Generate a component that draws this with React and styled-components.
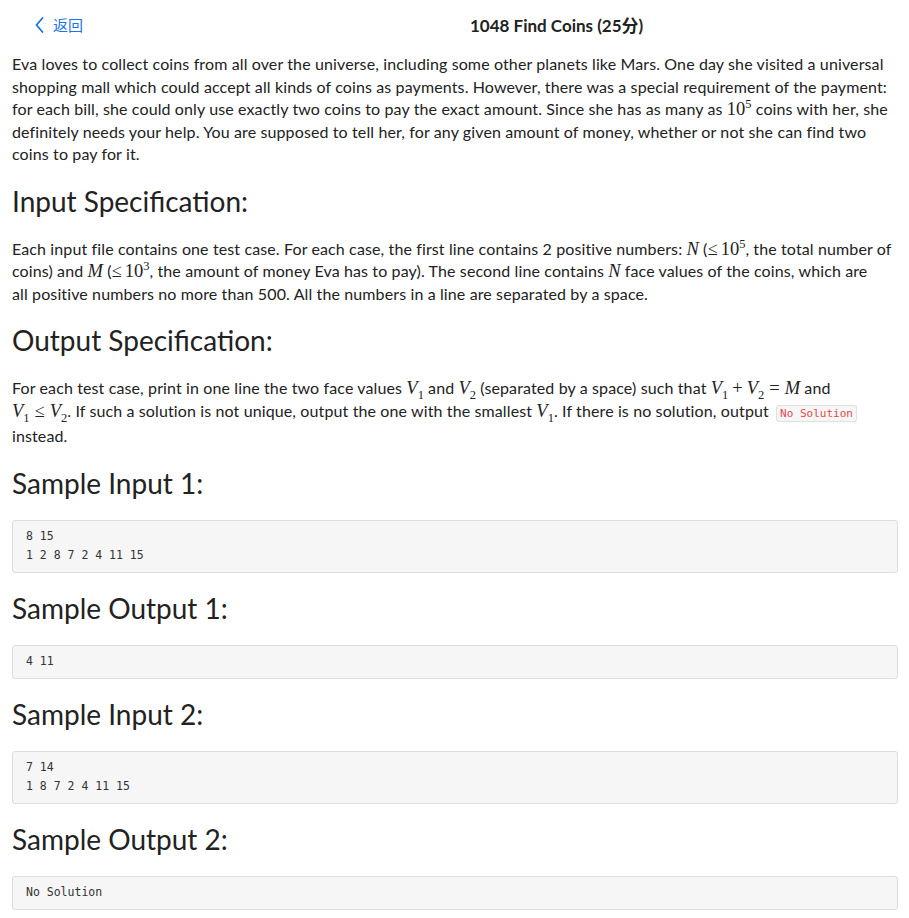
import React from 'react';
import styled, { createGlobalStyle } from 'styled-components';

const GlobalStyle = createGlobalStyle`
  html, body { margin: 0; padding: 0; background: #fff; }
  body {
    font-family: Lato, "Noto Sans", "Noto Sans CJK SC", sans-serif;
    color: #222;
  }
`;

const Page = styled.div`
  width: 909px;
  min-height: 918px;
  box-sizing: border-box;
`;

const Header = styled.header`
  display: grid;
  grid-template-columns: 435px auto;
  align-items: center;
  height: 49px;
  padding-left: 35px;
`;

const BackLink = styled.a`
  display: flex;
  align-items: center;
  gap: 8px;
  color: #1a73e8;
  font-size: 15px;
  font-family: "Noto Sans CJK SC", sans-serif;
  text-decoration: none;
  cursor: pointer;
`;

const Title = styled.h1`
  margin: 0;
  font-size: 17px;
  font-weight: 700;
  color: #222;
  font-family: Lato, "Noto Sans CJK SC", sans-serif;
`;

const Content = styled.main`
  padding: 0 11px 0 12px;
`;

const Para = styled.p`
  margin: 4px 0 0;
  font-size: 16px;
  letter-spacing: 0.12px;
  line-height: 22.5px;
`;

const Heading = styled.h2`
  margin: 18px 0 20px;
  font-size: 28px;
  font-weight: 400;
  line-height: 34px;
  color: #222;
`;

const Math = styled.span`
  font-family: "Liberation Serif", serif;
  font-size: 18.5px;
  line-height: 1;
  letter-spacing: 0;
  white-space: nowrap;
  font-style: ${p => (p.$upright ? 'normal' : 'italic')};
`;

const Op = styled.span`
  font-style: normal;
  margin: 0 ${p => p.$r ?? 4}px 0 ${p => p.$l ?? 4}px;
`;

const Sup = styled.sup`
  font-family: "Liberation Serif", serif;
  font-style: normal;
  font-size: 12.5px;
  line-height: 0;
`;

const Sub = styled.sub`
  font-family: "Liberation Serif", serif;
  font-style: normal;
  font-size: 12.5px;
  line-height: 0;
`;

const InlineCode = styled.code`
  font-family: "DejaVu Sans Mono", monospace;
  font-size: 11px;
  letter-spacing: 0;
  color: #e5484d;
  background: #f6f6f6;
  border: 1px solid #e0e0e0;
  border-radius: 3px;
  padding: 1px 3px;
  margin: 0 3px;
`;

const CodeBlock = styled.pre`
  margin: 0;
  background: #f6f6f6;
  border: 1px solid #ddd;
  border-radius: 3px;
  padding: 6px 13px 7px;
  font-family: "DejaVu Sans Mono", monospace;
  font-size: 11.5px;
  line-height: 19px;
  color: #333;
`;

const Chevron = () => (
  <svg width="10" height="16" viewBox="0 0 10 16" fill="none">
    <path d="M7.5 1L1.5 8l6 7" stroke="#1a73e8" strokeWidth="1.8" strokeLinecap="round" strokeLinejoin="round" />
  </svg>
);

const V = ({ n }) => (
  <Math>V<Sub>{n}</Sub></Math>
);

const Bound = ({ exp }) => (
  <Math $upright>
    <Op $l={0} $r={3}>≤</Op>10<Sup>{exp}</Sup>
  </Math>
);

const samples = [
  { title: 'Sample Input 1:', body: '8 15\n1 2 8 7 2 4 11 15' },
  { title: 'Sample Output 1:', body: '4 11' },
  { title: 'Sample Input 2:', body: '7 14\n1 8 7 2 4 11 15' },
  { title: 'Sample Output 2:', body: 'No Solution' },
];

export default function App() {
  return (
    <Page>
      <GlobalStyle />
      <Header>
        <BackLink>
          <Chevron />
          返回
        </BackLink>
        <Title>1048 Find Coins (25分)</Title>
      </Header>
      <Content>
        <Para>
          Eva loves to collect coins from all over the universe, including some other planets like Mars. One day she
          visited a universal shopping mall which could accept all kinds of coins as payments. However, there was a
          special requirement of the payment: for each bill, she could only use exactly two coins to pay the exact
          amount. Since she has as many as <Math $upright>10<Sup>5</Sup></Math> coins with her, she definitely needs
          your help. You are supposed to tell her, for any given amount of money, whether or not she can find two
          coins to pay for it.
        </Para>

        <Heading>Input Specification:</Heading>
        <Para>
          Each input file contains one test case. For each case, the first line contains 2 positive numbers:{' '}
          <Math>N</Math> (<Bound exp="5" />, the total number of coins) and <Math>M</Math> (<Bound exp="3" />, the
          amount of money Eva has to pay). The second line contains <Math>N</Math> face values of the coins, which are
          <br />
          all positive numbers no more than 500. All the numbers in a line are separated by a space.
        </Para>

        <Heading>Output Specification:</Heading>
        <Para>
          For each test case, print in one line the two face values <V n="1" /> and <V n="2" /> (separated by a space)
          such that{' '}
          <Math>
            V<Sub>1</Sub><Op>+</Op>V<Sub>2</Sub><Op $l={5} $r={5}>=</Op>M
          </Math>{' '}
          and
          <br />
          <Math>
            V<Sub>1</Sub><Op $l={5} $r={5}>≤</Op>V<Sub>2</Sub>
          </Math>
          . If such a solution is not unique, output the one with the smallest <V n="1" />. If there is no solution,
          output <InlineCode>No Solution</InlineCode>
          <br />
          instead.
        </Para>

        {samples.map(s => (
          <section key={s.title}>
            <Heading>{s.title}</Heading>
            <CodeBlock>{s.body}</CodeBlock>
          </section>
        ))}
      </Content>
    </Page>
  );
}
